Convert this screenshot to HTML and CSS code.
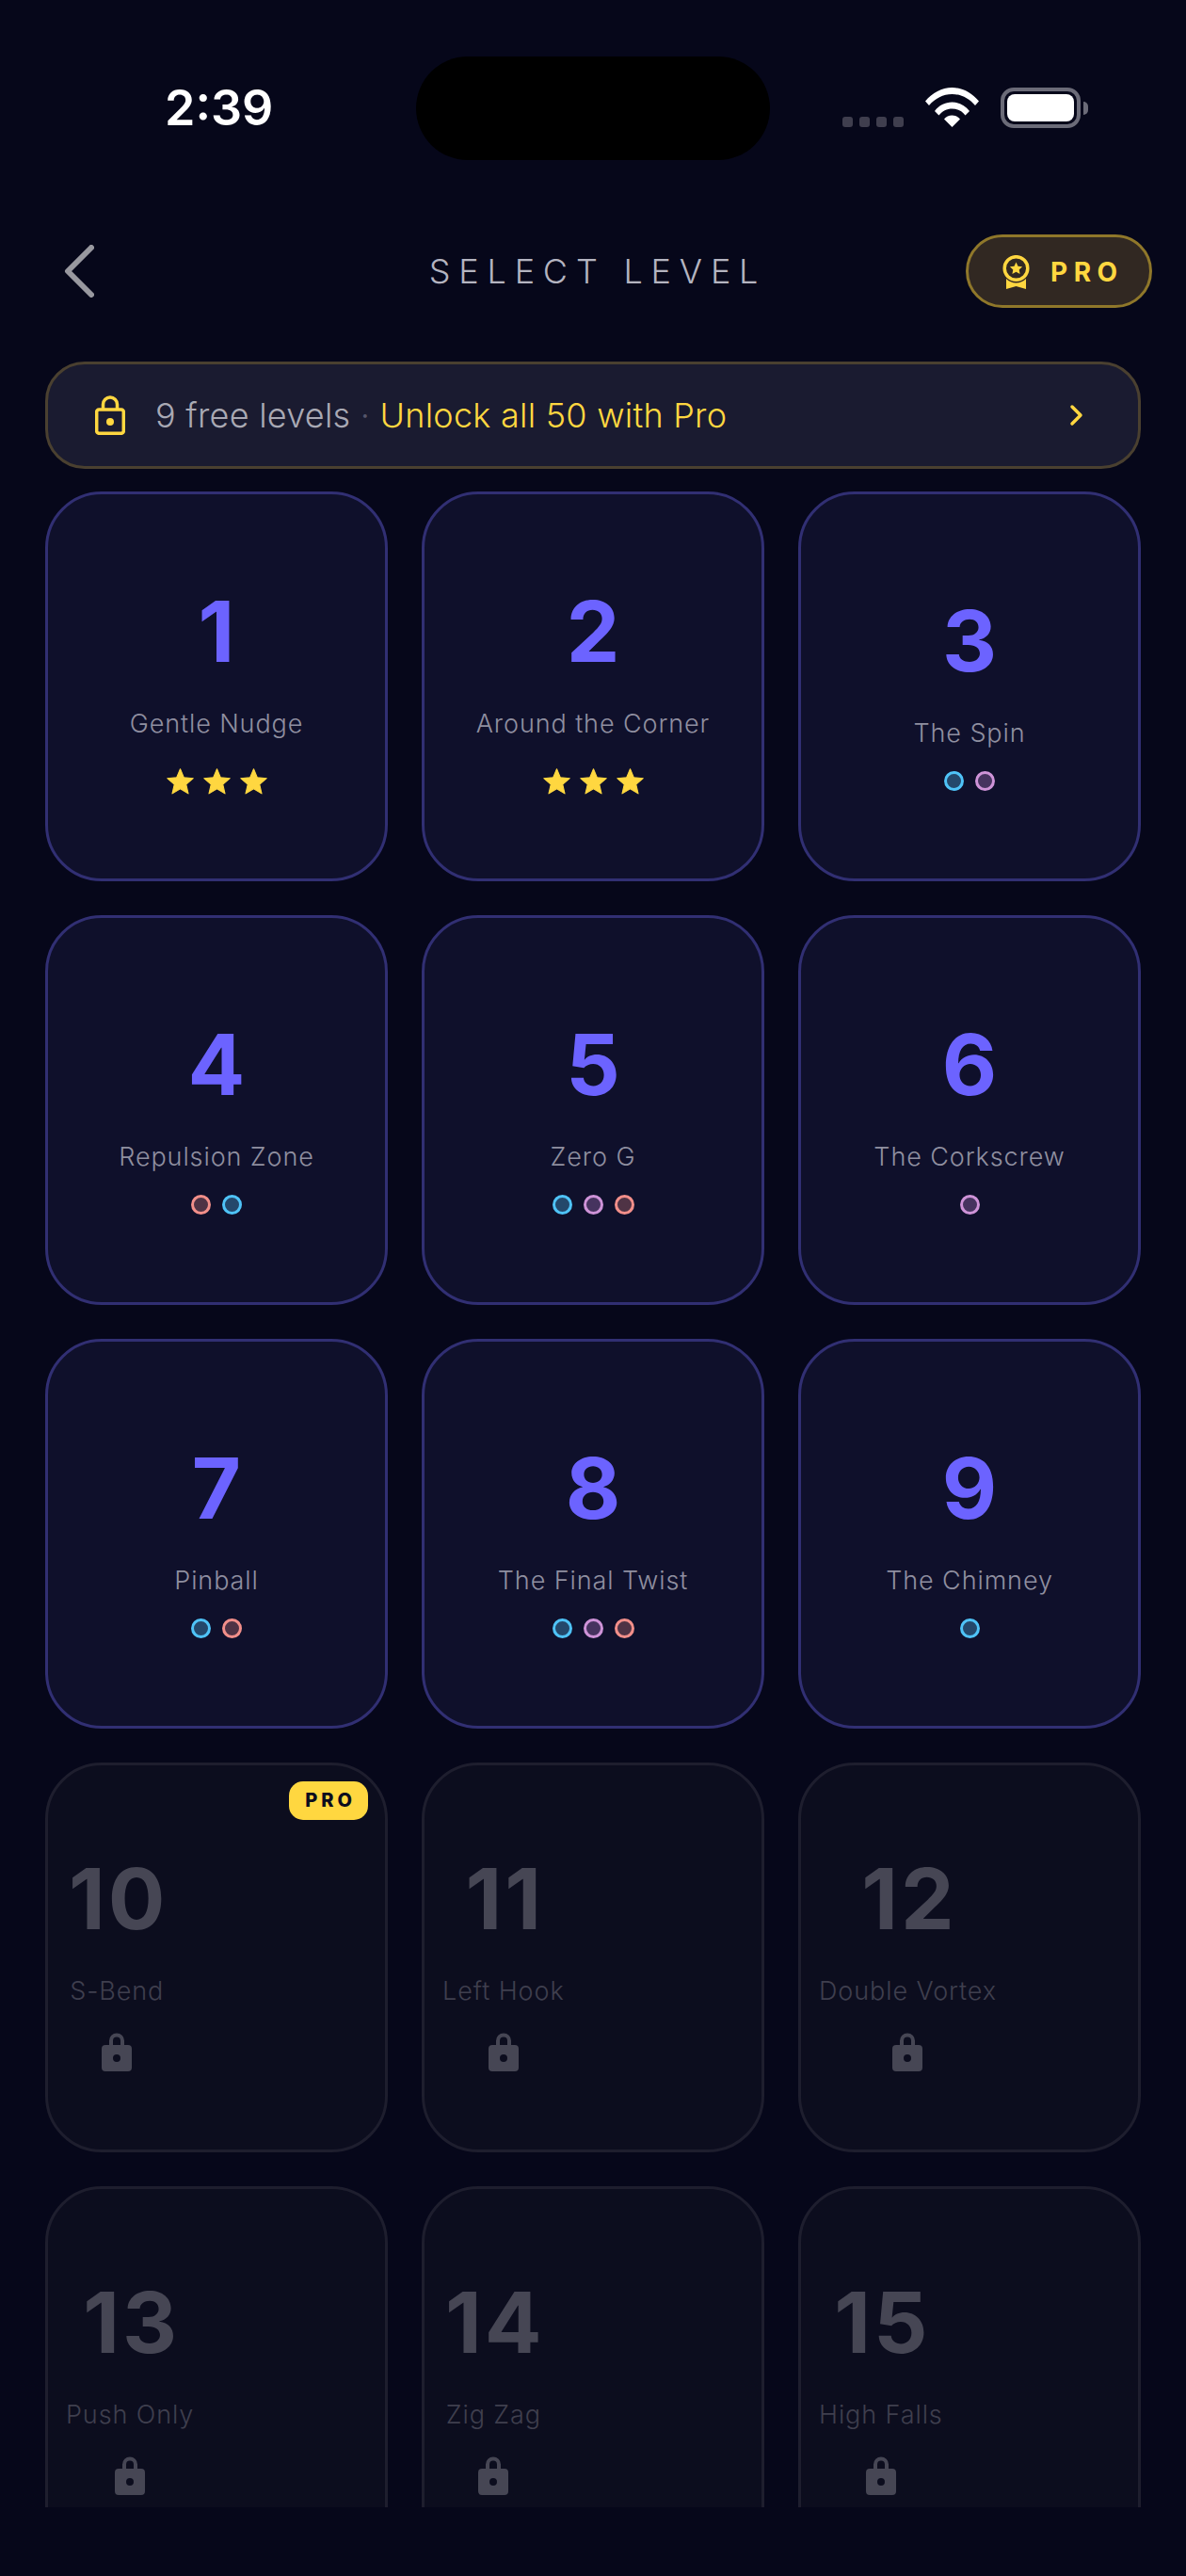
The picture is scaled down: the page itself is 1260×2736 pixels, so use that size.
FILE: index.html
```html
<!DOCTYPE html>
<html lang="en">
  <head>
    <meta charset="UTF-8" />
    <meta name="viewport" content="width=device-width, initial-scale=1.0" />
    <title>Select Level</title>
    <link rel="stylesheet" href="styles.css">
  </head>
  <body>
    <svg class="defs" width="0" height="0">
      <symbol id="star" viewBox="0 0 24 24">
        <path d="M12 17.27L18.18 21l-1.64-7.03L22 9.24l-7.19-.61L12 2 9.19 8.63 2 9.24l5.46 4.73L5.82 21z" fill="#ffd740" stroke="#ffd740" stroke-width="0.8" stroke-linejoin="round" />
      </symbol>
      <symbol id="lock" viewBox="0 0 32 42">
        <path fill-rule="evenodd" d="M8 14V9.500a8 8 0 0 1 16 0V14h4a4 4 0 0 1 4 4v20a4 4 0 0 1-4 4H4a4 4 0 0 1-4-4V18a4 4 0 0 1 4-4zM12 14h8V9.500a4 4 0 0 0-8 0zM16 24a4 4 0 1 0 0 8 4 4 0 0 0 0-8z" fill="#464654" />
      </symbol>
    </svg>

    <header class="statusbar">
      <div class="time">2:39</div>
      <div class="island"></div>
      <div class="status-icons">
        <div class="signal"><i></i><i></i><i></i><i></i></div>
        <svg class="wifi" width="57" height="42" viewBox="0 0 57 42">
          <path d="M0 14.500C7.500 5.500 17.500 0 28.500 0S49.500 5.500 57 14.500l-4 4.500C46.500 11.500 38 7 28.500 7S10.500 11.500 4 19z" fill="#fff" />
          <path d="M10 25C14.500 19 21 15.500 28.500 15.500S42.500 19 47 25l-4.500 4.500C39 25 34 22.500 28.500 22.500S18 25 14.500 29.500z" fill="#fff" />
          <path d="M20 33.500C22.200 30.800 25 29.500 28.500 29.500S34.800 30.800 37 33.500L28.500 42z" fill="#fff" />
        </svg>
        <div class="battery"><div class="battery-fill"></div></div>
        <div class="battery-cap"></div>
      </div>
    </header>

    <nav class="topbar">
      <button class="back">
        <svg width="32" height="56" viewBox="0 0 32 56">
          <path d="M29 3L4 28l25 25" fill="none" stroke="#98989f" stroke-width="6" stroke-linecap="round" stroke-linejoin="round" />
        </svg>
      </button>
      <h1 class="title">SELECT LEVEL</h1>
      <button class="pro-button">
        <svg width="29" height="36" viewBox="0 0 29 36">
          <path d="M4 25v11l10.500-3 10.500 3V25a14.500 14.500 0 0 1-21 0z" fill="#ffd740" />
          <circle cx="14.500" cy="14" r="12.300" fill="#312822" stroke="#ffd740" stroke-width="3.500" />
          <path d="M14.500 7.500l2 4.300 4.600.5-3.400 3.100.9 4.600-4.100-2.300-4.100 2.300.9-4.600-3.400-3.100 4.600-.5z" fill="#ffd740" />
        </svg>
        <span>PRO</span>
      </button>
    </nav>

    <div class="banner">
      <svg class="banner-lock" width="32" height="42" viewBox="0 0 32 42">
        <path d="M8.500 15V9.500a7.500 7.500 0 0 1 15 0V15" fill="none" stroke="#ffd740" stroke-width="3.500" />
        <rect x="1.700" y="15" width="28.600" height="25.300" rx="2.500" fill="none" stroke="#ffd740" stroke-width="3.500" />
        <circle cx="16" cy="28" r="4" fill="#ffd740" />
      </svg>
      <p class="banner-text">9 free levels <span class="sep">·</span> <span class="unlock">Unlock all 50 with Pro</span></p>
      <svg class="banner-arrow" width="17" height="24" viewBox="0 0 17 24">
        <path d="M4 3l9 9-9 9" fill="none" stroke="#ffd740" stroke-width="3.500" stroke-linecap="round" stroke-linejoin="round" />
      </svg>
    </div>

    <main class="levels">
      <article class="card">
        <div class="num">1</div>
        <div class="name">Gentle Nudge</div>
        <div class="stars">
          <svg><use href="#star" /></svg><svg><use href="#star" /></svg><svg><use href="#star" /></svg>
        </div>
      </article>
      <article class="card">
        <div class="num">2</div>
        <div class="name">Around the Corner</div>
        <div class="stars">
          <svg><use href="#star" /></svg><svg><use href="#star" /></svg><svg><use href="#star" /></svg>
        </div>
      </article>
      <article class="card">
        <div class="num">3</div>
        <div class="name">The Spin</div>
        <div class="dots"><i class="blue"></i><i class="purple"></i></div>
      </article>
      <article class="card">
        <div class="num">4</div>
        <div class="name">Repulsion Zone</div>
        <div class="dots"><i class="red"></i><i class="blue"></i></div>
      </article>
      <article class="card">
        <div class="num">5</div>
        <div class="name">Zero G</div>
        <div class="dots"><i class="blue"></i><i class="purple"></i><i class="red"></i></div>
      </article>
      <article class="card">
        <div class="num">6</div>
        <div class="name">The Corkscrew</div>
        <div class="dots"><i class="purple"></i></div>
      </article>
      <article class="card">
        <div class="num">7</div>
        <div class="name">Pinball</div>
        <div class="dots"><i class="blue"></i><i class="red"></i></div>
      </article>
      <article class="card">
        <div class="num">8</div>
        <div class="name">The Final Twist</div>
        <div class="dots"><i class="blue"></i><i class="purple"></i><i class="red"></i></div>
      </article>
      <article class="card">
        <div class="num">9</div>
        <div class="name">The Chimney</div>
        <div class="dots"><i class="blue"></i></div>
      </article>

      <article class="card locked">
        <span class="badge">PRO</span>
        <div class="locked-col">
          <div class="num">10</div>
          <div class="name">S-Bend</div>
          <svg class="lock"><use href="#lock" /></svg>
        </div>
      </article>
      <article class="card locked">
        <div class="locked-col">
          <div class="num">11</div>
          <div class="name">Left Hook</div>
          <svg class="lock"><use href="#lock" /></svg>
        </div>
      </article>
      <article class="card locked">
        <div class="locked-col">
          <div class="num">12</div>
          <div class="name">Double Vortex</div>
          <svg class="lock"><use href="#lock" /></svg>
        </div>
      </article>
      <article class="card locked">
        <div class="locked-col">
          <div class="num">13</div>
          <div class="name">Push Only</div>
          <svg class="lock"><use href="#lock" /></svg>
        </div>
      </article>
      <article class="card locked">
        <div class="locked-col">
          <div class="num">14</div>
          <div class="name">Zig Zag</div>
          <svg class="lock"><use href="#lock" /></svg>
        </div>
      </article>
      <article class="card locked">
        <div class="locked-col">
          <div class="num">15</div>
          <div class="name">High Falls</div>
          <svg class="lock"><use href="#lock" /></svg>
        </div>
      </article>
    </main>
  </body>
</html>
```

FILE: styles.css
```css
* {
  box-sizing: border-box;
}

body {
  margin: 0;
  height: 2736px;
  overflow: hidden;
  background-color: #06071a;
  font-family: Inter, "Liberation Sans", sans-serif;
}

.defs {
  display: block;
  height: 0;
}

/* status bar */
.statusbar {
  display: grid;
  grid-template-columns: 442px 376px 1fr;
  height: 110px;
  margin-top: 60px;
}

.time {
  align-self: center;
  padding-left: 175px;
  font-size: 52px;
  font-weight: 600;
  line-height: 1;
  color: #fff;
}

.island {
  background-color: #000;
  border-radius: 55px;
}

.status-icons {
  display: flex;
  align-items: flex-end;
  height: 43px;
  margin-top: 33px;
  padding-left: 77px;
}

.signal {
  display: flex;
  gap: 7px;
  margin-right: 23px;
  margin-bottom: 1px;
}

.signal i {
  width: 11px;
  height: 11px;
  border-radius: 3px;
  background-color: #3f3e4e;
}

.wifi {
  margin-right: 23px;
  margin-bottom: 1px;
}

.battery {
  width: 85px;
  height: 43px;
  padding: 3px;
  border: 4px solid #6b6b78;
  border-radius: 14px;
}

.battery-fill {
  height: 100%;
  background-color: #fff;
  border-radius: 8px;
}

.battery-cap {
  width: 5px;
  height: 14px;
  margin: 0 0 14px 3px;
  background-color: #6b6b78;
  border-radius: 0 5px 5px 0;
}

/* top bar */
.topbar {
  display: grid;
  grid-template-columns: 1fr auto 1fr;
  align-items: center;
  margin-top: 79px;
  padding: 0 36px;
}

.back {
  justify-self: start;
  display: flex;
  margin-left: 32px;
  padding: 0;
  border: none;
  background: none;
}

.title {
  margin: 0;
  font-size: 36px;
  font-weight: 300;
  letter-spacing: 8.800px;
  text-indent: 10px;
  color: #b4b4c0;
}

.pro-button {
  justify-self: end;
  display: flex;
  align-items: center;
  gap: 22px;
  width: 198px;
  height: 78px;
  padding: 2px 0 0 36px;
  border: 3px solid #8f772a;
  border-radius: 39px;
  background-color: #312822;
  font-family: inherit;
  font-size: 28px;
  font-weight: 700;
  letter-spacing: 6.500px;
  color: #ffd740;
}

/* free levels banner */
.banner {
  display: flex;
  align-items: center;
  height: 114px;
  margin: 57px 48px 0;
  padding: 0 57px 0 50px;
  background-color: #1a1b30;
  border: 3px solid #4a4030;
  border-radius: 42px;
}

.banner-text {
  flex: 1;
  margin: 0 0 0 32px;
  font-size: 36px;
  font-weight: 350;
  letter-spacing: 0.250px;
  color: #a9a9b4;
}

.sep {
  color: #55556a;
}

.unlock {
  color: #ffd740;
}

/* level cards */
.levels {
  display: grid;
  grid-template-columns: repeat(3, 364px);
  grid-auto-rows: 414px;
  gap: 36px;
  height: 2141px;
  margin: 24px 48px 0;
  overflow: hidden;
}

.card {
  position: relative;
  display: flex;
  flex-direction: column;
  align-items: center;
  justify-content: center;
  padding-top: 6px;
  background-color: #0f102b;
  border: 3px solid #312f73;
  border-radius: 60px;
}

.num {
  font-size: 90px;
  font-weight: 700;
  font-optical-sizing: none;
  line-height: 106px;
  letter-spacing: 3px;
  text-indent: 3px;
  color: #6c63ff;
}

.name {
  margin-top: 28px;
  font-size: 27px;
  font-weight: 350;
  line-height: 33px;
  letter-spacing: 0.900px;
  white-space: nowrap;
  color: #8f8fa0;
}

.stars {
  display: flex;
  gap: 6px;
  margin-top: 29px;
}

.stars svg {
  width: 33px;
  height: 33px;
}

/* dots sit lower than the name gap alone gives, row is pulled out of the centring */
.dots {
  display: flex;
  gap: 12px;
  margin-top: 24px;
  margin-bottom: -4px;
}

.dots i {
  width: 21px;
  height: 21px;
  border-width: 3px;
  border-style: solid;
  border-radius: 50%;
}

.blue {
  border-color: #4fc3f7;
  background-color: #24486b;
}

.purple {
  border-color: #ce93d8;
  background-color: #46335f;
}

.red {
  border-color: #f28f8a;
  background-color: #4f3345;
}

/* locked cards */
.locked {
  align-items: flex-start;
  padding-left: 19px;
  background-color: #0c0d1e;
  border-color: #1e1e2e;
}

.locked-col {
  display: flex;
  flex-direction: column;
  align-items: center;
}

.locked .num {
  color: #464654;
}

.locked .name {
  color: #3f3f4e;
}

.lock {
  width: 32px;
  height: 42px;
  margin-top: 27px;
}

.badge {
  position: absolute;
  top: 17px;
  right: 18px;
  width: 84px;
  height: 41px;
  background-color: #ffd740;
  border-radius: 15px;
  font-size: 20px;
  font-weight: 800;
  line-height: 41px;
  letter-spacing: 4px;
  text-indent: 4px;
  text-align: center;
  color: #0c0d1e;
}
```
